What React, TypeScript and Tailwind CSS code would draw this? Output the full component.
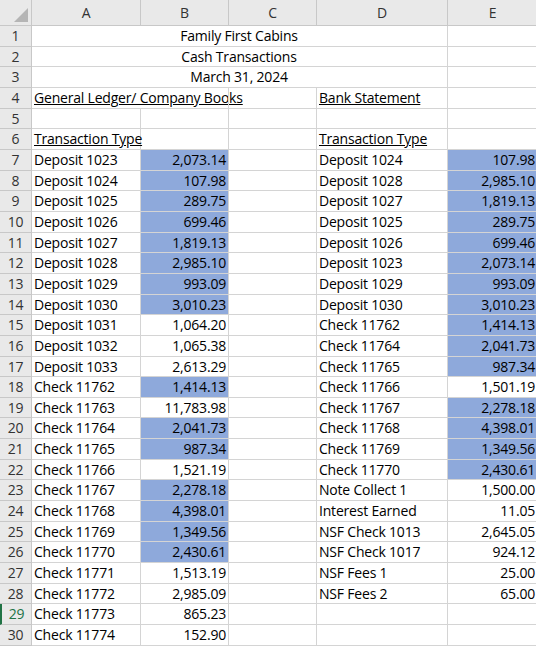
import React from "react";

const L: [string, string, boolean][] = [
["Deposit 1023","2,073.14",true],["Deposit 1024","107.98",true],["Deposit 1025","289.75",true],["Deposit 1026","699.46",true],["Deposit 1027","1,819.13",true],["Deposit 1028","2,985.10",true],["Deposit 1029","993.09",true],["Deposit 1030","3,010.23",true],["Deposit 1031","1,064.20",false],["Deposit 1032","1,065.38",false],["Deposit 1033","2,613.29",false],["Check 11762","1,414.13",true],["Check 11763","11,783.98",false],["Check 11764","2,041.73",true],["Check 11765","987.34",true],["Check 11766","1,521.19",false],["Check 11767","2,278.18",true],["Check 11768","4,398.01",true],["Check 11769","1,349.56",true],["Check 11770","2,430.61",true],["Check 11771","1,513.19",false],["Check 11772","2,985.09",false],["Check 11773","865.23",false],["Check 11774","152.90",false]];
const R: [string, string, boolean][] = [
["Deposit 1024","107.98",true],["Deposit 1028","2,985.10",true],["Deposit 1027","1,819.13",true],["Deposit 1025","289.75",true],["Deposit 1026","699.46",true],["Deposit 1023","2,073.14",true],["Deposit 1029","993.09",true],["Deposit 1030","3,010.23",true],["Check 11762","1,414.13",true],["Check 11764","2,041.73",true],["Check 11765","987.34",true],["Check 11766","1,501.19",false],["Check 11767","2,278.18",true],["Check 11768","4,398.01",true],["Check 11769","1,349.56",true],["Check 11770","2,430.61",true],["Note Collect 1","1,500.00",false],["Interest Earned","11.05",false],["NSF Check 1013","2,645.05",false],["NSF Check 1017","924.12",false],["NSF Fees 1","25.00",false],["NSF Fees 2","65.00",false]];

const cell = "border-r border-b border-[#d4d4d4] px-[2px] whitespace-nowrap overflow-visible leading-[20px]";

export default function App() {
  const rows: React.ReactNode[] = [];
  for (let r = 1; r <= 30; r++) {
    const i = r - 7;
    const l = i >= 0 ? L[i] : null;
    const rr = i >= 0 ? R[i] : null;
    let a: React.ReactNode = "", d: React.ReactNode = "";
    let title: string | null = null;
    if (r === 1) title = "Family First Cabins";
    if (r === 2) title = "Cash Transactions";
    if (r === 3) title = "March 31, 2024";
    if (r === 4) { a = <span className="underline">General Ledger/ Company Books</span>; d = <span className="underline">Bank Statement</span>; }
    if (r === 6) { a = <span className="underline">Transaction Type</span>; d = <span className="underline">Transaction Type</span>; }
    if (l) a = l[0];
    if (rr) d = rr[0];
    const sel = r === 29;
    rows.push(
      <React.Fragment key={r}>
        <div className={`bg-[#e9e9e9] border-r border-b border-[#c8c8c8] text-center leading-[20px] ${sel ? "text-[#217346] bg-[#d2d2d2] border-l-2 border-l-[#217346]" : "text-[#333]"}`}>{r}</div>
        {title ? (
          <>
            <div className="border-b border-[#d4d4d4]"></div>
            <div className="col-span-3 border-r border-b border-[#d4d4d4] text-center leading-[20px] relative"><span className="absolute left-[-110px] right-0 text-center">{title}</span></div>
          </>
        ) : (
          <>
            <div className={`${cell} ${r===4?"border-r-0":""}`}>{a}</div>
            <div className={`${cell} text-right ${l && l[2] ? "bg-[#8ea9db]" : ""}`}>{l ? l[1] : ""}</div>
            <div className={cell}></div>
            <div className={cell}>{d}</div>
          </>
        )}
        <div className={`${cell} text-right ${rr && rr[2] ? "bg-[#8ea9db]" : ""}`}>{rr ? rr[1] : ""}</div>
      </React.Fragment>
    );
  }
  return (
    <div className="w-[536px] h-[646px] overflow-hidden bg-white text-[14px] text-black" style={{ fontFamily: '"Open Sans", sans-serif', letterSpacing: "-0.2px" }}>
      <div className="grid grid-cols-[32px_109px_88px_88px_131px_90px] grid-rows-[26px_repeat(30,20.67px)]">
        <div className="bg-[#e9e9e9] border-r border-b border-[#c8c8c8] relative">
          <div className="absolute right-[3px] bottom-[3px] w-0 h-0 border-l-[14px] border-l-transparent border-b-[14px] border-b-[#b5b5b5]"></div>
        </div>
        {["A","B","C","D","E"].map(c => (
          <div key={c} className="bg-[#e9e9e9] border-r border-b border-[#c8c8c8] text-center leading-[26px] text-[#333]">{c}</div>
        ))}
        {rows}
      </div>
    </div>
  );
}
